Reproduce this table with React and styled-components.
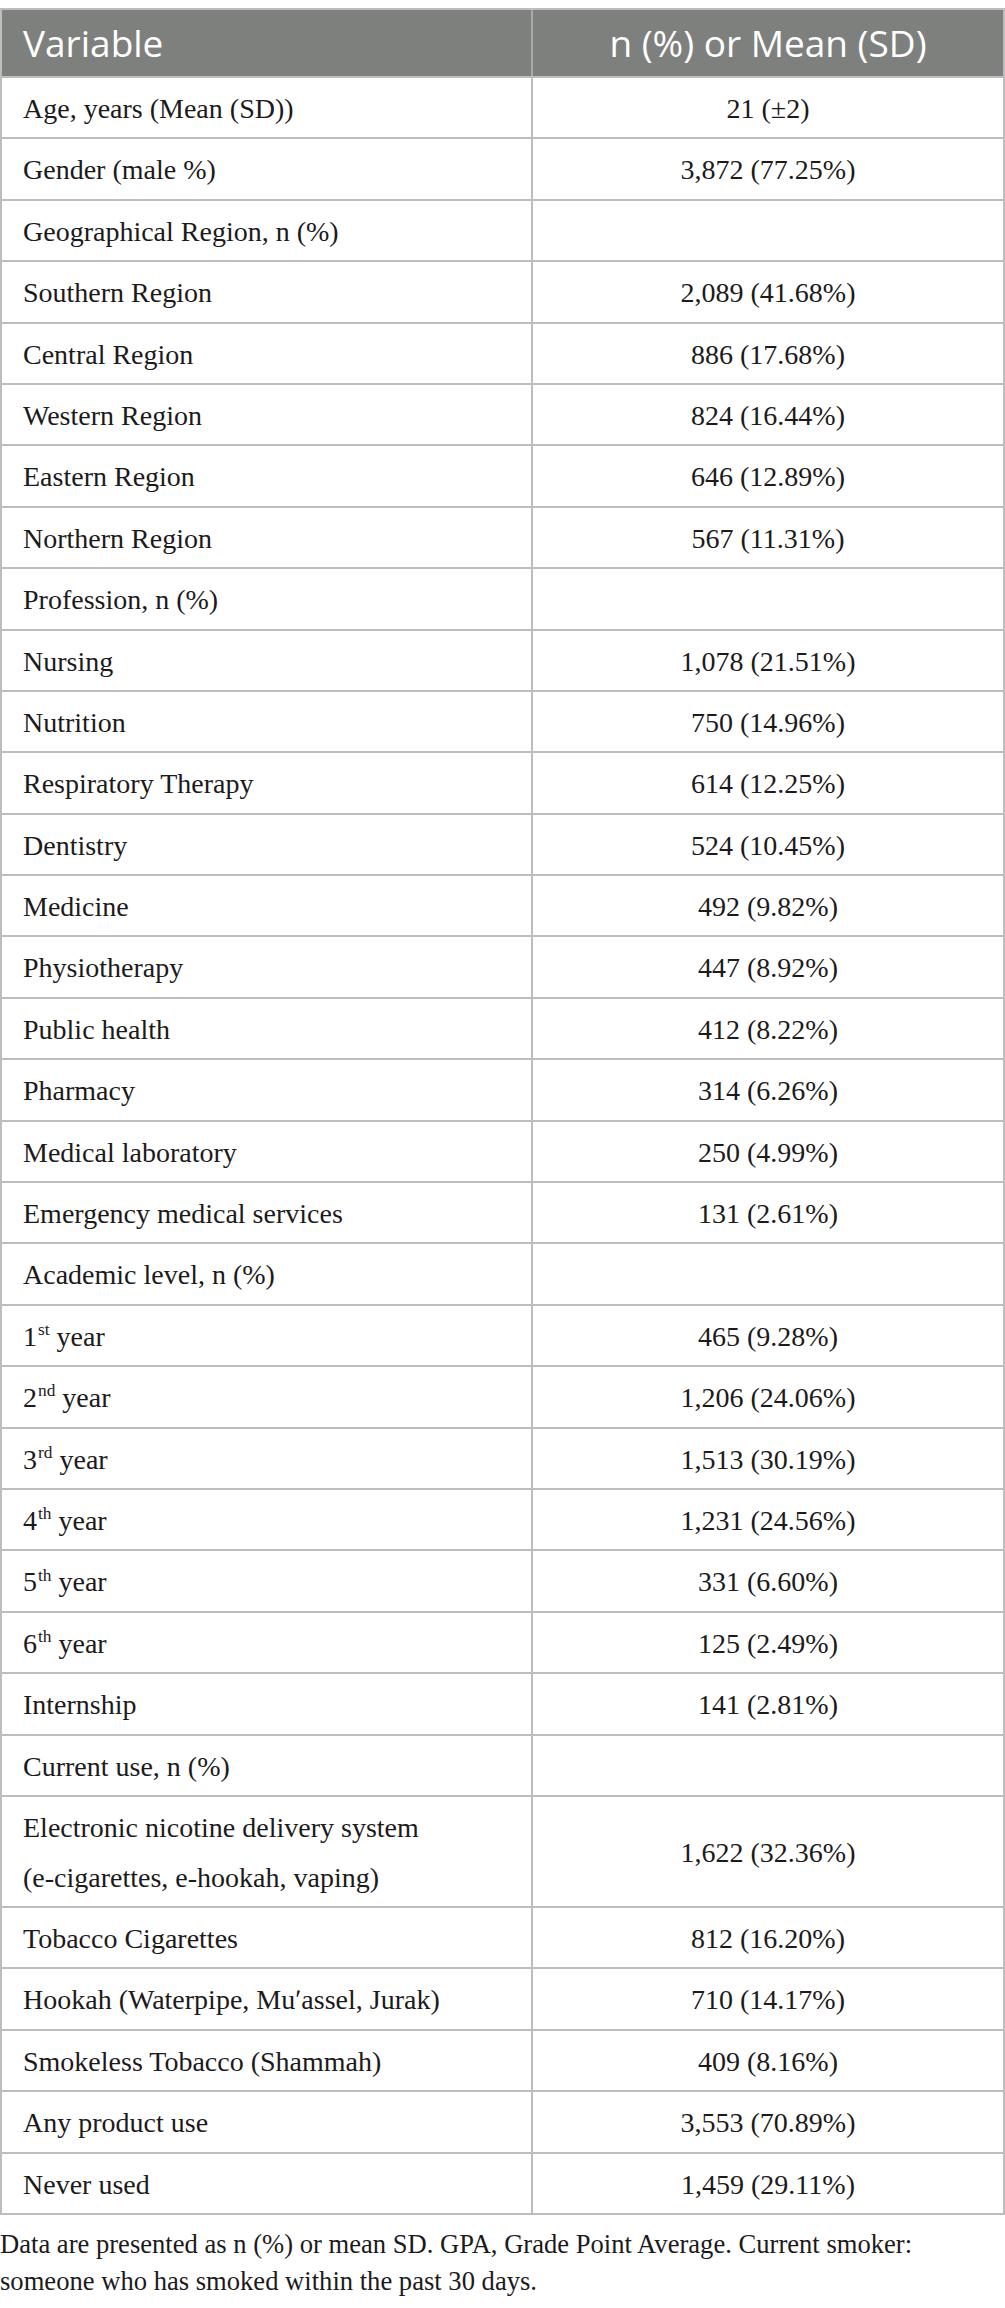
import React from "react";
import styled, { createGlobalStyle } from "styled-components";

const GlobalStyle = createGlobalStyle`
  html, body {
    margin: 0;
    padding: 0;
    background: #ffffff;
  }
  * { box-sizing: border-box; }
`;

const Page = styled.div`
  width: 1005px;
  padding-top: 8px;
  font-family: "Liberation Serif", "Times New Roman", serif;
  color: #1c1a1b;
`;

const Table = styled.div`
  width: 1005px;
  border: 2px solid #bdbdbd;
`;

const HeadRow = styled.div`
  display: grid;
  grid-template-columns: 531px 1fr;
  background: #7e807e;
  height: 66px;
`;

const HeadCell = styled.div`
  font-family: "Open Sans", "Liberation Sans", sans-serif;
  font-size: 37px;
  font-weight: 400;
  color: #ffffff;
  line-height: 66px;
  white-space: nowrap;
  padding: 0 ${(p) => (p.$center ? "0" : "21px")};
  text-align: ${(p) => (p.$center ? "center" : "left")};
  border-right: ${(p) => (p.$divider ? "2px solid #a9aaa9" : "none")};
`;

const Row = styled.div`
  display: grid;
  grid-template-columns: 531px 1fr;
  border-top: 2px solid #bdbdbd;
`;

const Cell = styled.div`
  font-size: 28px;
  line-height: 49.7px;
  padding: 6px ${(p) => (p.$center ? "0" : "21px")} 3.7px;
  text-align: ${(p) => (p.$center ? "center" : "left")};
  border-right: ${(p) => (p.$divider ? "2px solid #bdbdbd" : "none")};
  display: flex;
  flex-direction: column;
  justify-content: center;
  align-items: ${(p) => (p.$center ? "center" : "flex-start")};
  white-space: nowrap;
`;

const Sup = styled.sup`
  font-size: 0.62em;
  line-height: 0;
  vertical-align: 0.62em;
  margin-left: 1px;
`;

const Note = styled.p`
  margin: 11.5px 0 0;
  font-size: 26.6px;
  line-height: 37px;
  width: 1005px;
`;

const rows = [
  { label: "Age, years (Mean (SD))", value: "21 (±2)" },
  { label: "Gender (male %)", value: "3,872 (77.25%)" },
  { label: "Geographical Region, n (%)", value: "" },
  { label: "Southern Region", value: "2,089 (41.68%)" },
  { label: "Central Region", value: "886 (17.68%)" },
  { label: "Western Region", value: "824 (16.44%)" },
  { label: "Eastern Region", value: "646 (12.89%)" },
  { label: "Northern Region", value: "567 (11.31%)" },
  { label: "Profession, n (%)", value: "" },
  { label: "Nursing", value: "1,078 (21.51%)" },
  { label: "Nutrition", value: "750 (14.96%)" },
  { label: "Respiratory Therapy", value: "614 (12.25%)" },
  { label: "Dentistry", value: "524 (10.45%)" },
  { label: "Medicine", value: "492 (9.82%)" },
  { label: "Physiotherapy", value: "447 (8.92%)" },
  { label: "Public health", value: "412 (8.22%)" },
  { label: "Pharmacy", value: "314 (6.26%)" },
  { label: "Medical laboratory", value: "250 (4.99%)" },
  { label: "Emergency medical services", value: "131 (2.61%)" },
  { label: "Academic level, n (%)", value: "" },
  { num: "1", sup: "st", label: " year", value: "465 (9.28%)" },
  { num: "2", sup: "nd", label: " year", value: "1,206 (24.06%)" },
  { num: "3", sup: "rd", label: " year", value: "1,513 (30.19%)" },
  { num: "4", sup: "th", label: " year", value: "1,231 (24.56%)" },
  { num: "5", sup: "th", label: " year", value: "331 (6.60%)" },
  { num: "6", sup: "th", label: " year", value: "125 (2.49%)" },
  { label: "Internship", value: "141 (2.81%)" },
  { label: "Current use, n (%)", value: "" },
  {
    lines: ["Electronic nicotine delivery system", "(e-cigarettes, e-hookah, vaping)"],
    value: "1,622 (32.36%)",
  },
  { label: "Tobacco Cigarettes", value: "812 (16.20%)" },
  { label: "Hookah (Waterpipe, Muʹassel, Jurak)", value: "710 (14.17%)" },
  { label: "Smokeless Tobacco (Shammah)", value: "409 (8.16%)" },
  { label: "Any product use", value: "3,553 (70.89%)" },
  { label: "Never used", value: "1,459 (29.11%)" },
];

function Label({ row }) {
  if (row.lines) {
    return row.lines.map((l) => <span key={l}>{l}</span>);
  }
  if (row.sup) {
    return (
      <span>
        {row.num}
        <Sup>{row.sup}</Sup>
        {row.label}
      </span>
    );
  }
  return <span>{row.label}</span>;
}

export default function App() {
  return (
    <>
      <GlobalStyle />
      <Page>
        <Table>
          <HeadRow>
            <HeadCell $divider>Variable</HeadCell>
            <HeadCell $center>n (%) or Mean (SD)</HeadCell>
          </HeadRow>
          {rows.map((row, i) => (
            <Row key={i}>
              <Cell $divider>
                <Label row={row} />
              </Cell>
              <Cell $center>{row.value}</Cell>
            </Row>
          ))}
        </Table>
        <Note>
          Data are presented as n (%) or mean SD. GPA, Grade Point Average. Current smoker:
          someone who has smoked within the past 30&nbsp;days.
        </Note>
      </Page>
    </>
  );
}
